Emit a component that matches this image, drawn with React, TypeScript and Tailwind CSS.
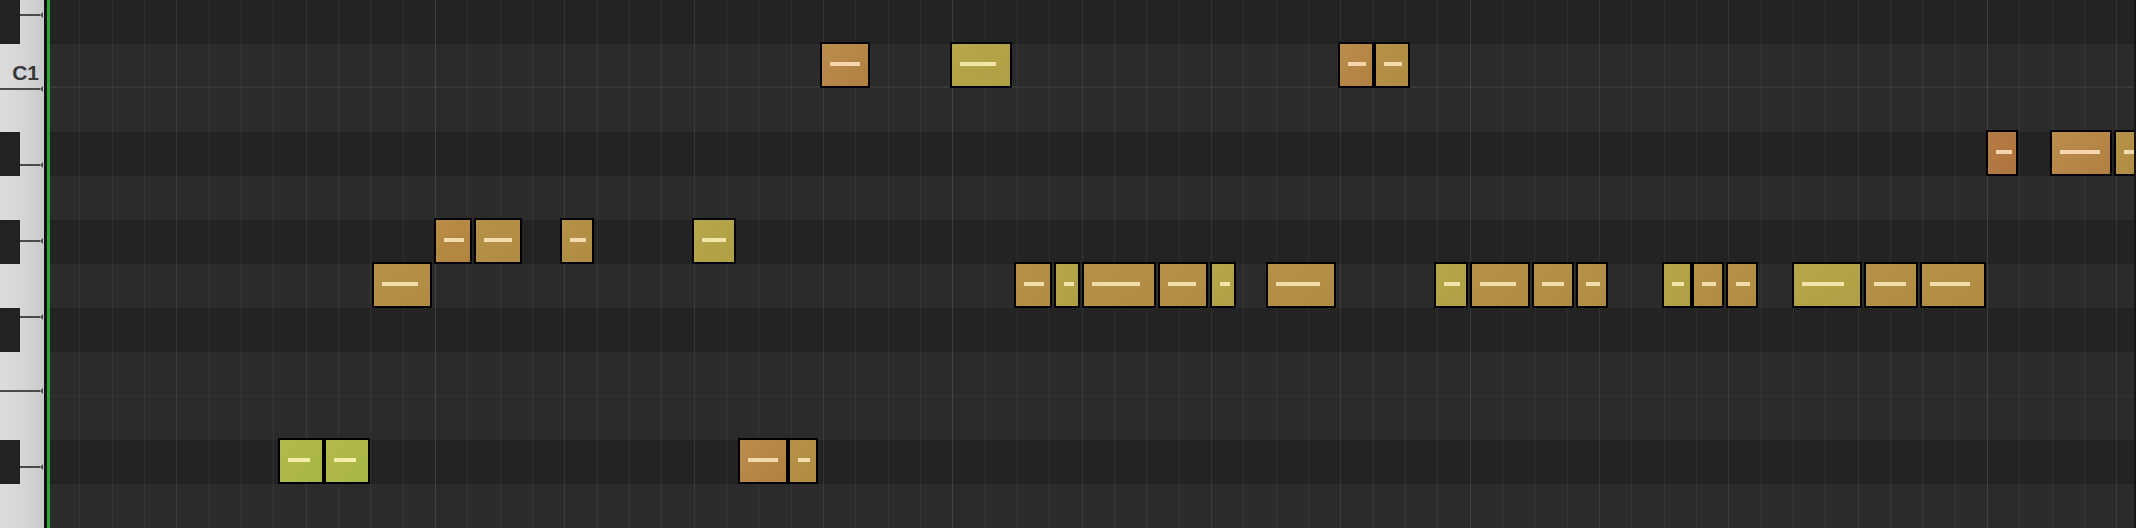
import React from "react";

const ROW_H = 44;
const DARK = [true, false, false, true, false, true, false, true, false, false, true, false];
const GRID_X = 50;
const STEP = 32.333;

const PAL = {
  orange: { bg: "bg-linear-to-br from-[#bb8d4c] to-[#b08040]", dash: "bg-[#f3d6ab]" },
  brown: { bg: "bg-linear-to-br from-[#b77c45] to-[#ad743d]", dash: "bg-[#f2d3ae]" },
  amber: { bg: "bg-linear-to-br from-[#ba8c45] to-[#b1853e]", dash: "bg-[#f2d9ab]" },
  gold: { bg: "bg-linear-to-br from-[#b69248] to-[#b08b42]", dash: "bg-[#f1dcab]" },
  olive: { bg: "bg-linear-to-br from-[#b6a74b] to-[#b09f44]", dash: "bg-[#f2e5ab]" },
  lime: { bg: "bg-linear-to-br from-[#b0bb4c] to-[#aab547]", dash: "bg-[#f4eca9]" },
} as const;

type Note = { x: number; w: number; r: number; d: number; c: keyof typeof PAL };

const NOTES: Note[] = [
  { x: 820, w: 50, r: 1, d: 30, c: "orange" },
  { x: 950, w: 62, r: 1, d: 36, c: "olive" },
  { x: 1338, w: 35.5, r: 1, d: 18, c: "orange" },
  { x: 1373.5, w: 36.5, r: 1, d: 18, c: "gold" },
  { x: 1986, w: 32, r: 3, d: 16, c: "brown" },
  { x: 2050, w: 62, r: 3, d: 40, c: "orange" },
  { x: 2114, w: 40, r: 3, d: 30, c: "gold" },
  { x: 434, w: 38, r: 5, d: 20, c: "amber" },
  { x: 474, w: 48, r: 5, d: 28, c: "gold" },
  { x: 560, w: 34, r: 5, d: 16, c: "gold" },
  { x: 692, w: 44, r: 5, d: 24, c: "olive" },
  { x: 372, w: 60, r: 6, d: 36, c: "gold" },
  { x: 1014, w: 38, r: 6, d: 20, c: "gold" },
  { x: 1054, w: 26, r: 6, d: 10, c: "olive" },
  { x: 1082, w: 74, r: 6, d: 48, c: "gold" },
  { x: 1158, w: 50, r: 6, d: 28, c: "gold" },
  { x: 1210, w: 26, r: 6, d: 10, c: "olive" },
  { x: 1266, w: 70, r: 6, d: 44, c: "gold" },
  { x: 1434, w: 34, r: 6, d: 16, c: "olive" },
  { x: 1470, w: 60, r: 6, d: 36, c: "gold" },
  { x: 1532, w: 42, r: 6, d: 22, c: "gold" },
  { x: 1576, w: 32, r: 6, d: 14, c: "gold" },
  { x: 1662, w: 30, r: 6, d: 12, c: "olive" },
  { x: 1692, w: 32, r: 6, d: 14, c: "gold" },
  { x: 1726, w: 32, r: 6, d: 14, c: "gold" },
  { x: 1792, w: 70, r: 6, d: 42, c: "olive" },
  { x: 1864, w: 54, r: 6, d: 32, c: "gold" },
  { x: 1920, w: 66, r: 6, d: 40, c: "gold" },
  { x: 278, w: 46, r: 10, d: 22, c: "lime" },
  { x: 324, w: 45.5, r: 10, d: 22, c: "lime" },
  { x: 738, w: 50, r: 10, d: 30, c: "orange" },
  { x: 788, w: 30, r: 10, d: 12, c: "gold" },
];

const KEY_LINES = [15, 88.5, 165, 241, 317, 391, 467];

function Piano() {
  return (
    <div className="relative w-[44px] h-[528px] shrink-0 bg-linear-to-r from-[#dcdcde] via-[#d6d6d8] to-[#c9c9cb]">
      <div className="flex flex-col">
        {DARK.map((dark, i) => (
          <div key={i} className="h-[44px] flex">
            {dark ? (
              <div className="relative z-10 w-[20px] h-[44px] bg-[#222222]" />
            ) : i === 1 ? (
              <div className="flex-1 flex justify-end pt-[17.5px] pr-[5px]">
                <span className="text-[21px] leading-none font-bold text-[#383838] [font-family:'Liberation_Sans',Arial,sans-serif]">
                  C1
                </span>
              </div>
            ) : null}
          </div>
        ))}
      </div>
      {KEY_LINES.map((y) => (
        <div
          key={y}
          className="absolute left-0 w-[44px] flex items-center h-[6px]"
          style={{ top: y - 3 }}
        >
          <div className="flex-1 h-[2px] bg-[#4a4a4a]" />
          <div className="w-0 h-0 border-y-[3px] border-y-transparent border-r-[3px] border-r-[#4a4a4a] mr-[1px]" />
        </div>
      ))}
    </div>
  );
}

function Grid() {
  const lines = Array.from({ length: 65 }, (_, k) => k).filter((k) => k > 0);
  return (
    <div className="relative flex-1 h-[528px] overflow-hidden">
      <div className="flex flex-col">
        {DARK.map((dark, i) => (
          <div key={i} className={dark ? "h-[44px] bg-[#232323]" : "h-[44px] bg-[#2b2b2b]"} />
        ))}
      </div>
      <div className="absolute left-0 right-0 top-[86px] h-[2px] bg-white/[0.06]" />
      <div className="absolute left-0 right-0 top-[395px] h-[1px] bg-white/[0.04]" />
      {lines.map((k) => {
        const cls =
          k % 16 === 12
            ? "absolute top-0 bottom-0 w-[1px] bg-white/[0.11]"
            : k % 4 === 0
            ? "absolute top-0 bottom-0 w-[1px] bg-white/[0.075]"
            : "absolute top-0 bottom-0 w-[1px] bg-white/[0.05]";
        return <div key={k} className={cls} style={{ left: STEP * k - 3 }} />;
      })}
      {NOTES.map((n, i) => {
        const p = PAL[n.c];
        return (
          <div
            key={i}
            className={`absolute h-[46px] border-2 border-black ${p.bg}`}
            style={{ left: n.x - GRID_X, width: n.w, top: n.r * ROW_H - 2 }}
          >
            <div className={`ml-[8px] mt-[18px] h-[4px] ${p.dash}`} style={{ width: n.d }} />
          </div>
        );
      })}
      <div className="absolute right-0 top-0 bottom-0 w-[2px] bg-[#161616]" />
    </div>
  );
}

export default function App() {
  return (
    <div className="w-[2136px] h-[528px] flex overflow-hidden bg-[#232323]">
      <Piano />
      <div className="w-[3px] h-[528px] bg-[#111111] shrink-0" />
      <div className="w-[3px] h-[528px] bg-[#2aa639] shrink-0" />
      <Grid />
    </div>
  );
}
